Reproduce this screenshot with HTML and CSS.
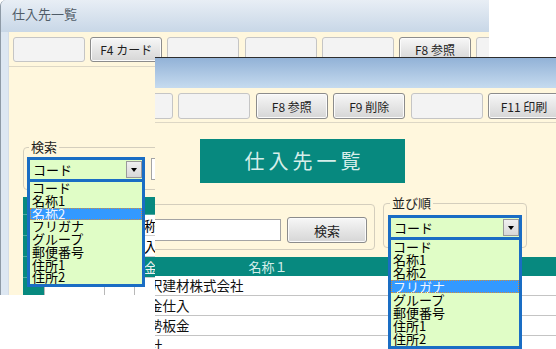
FILE: index.html
```html
<!DOCTYPE html>
<html lang="ja">
<head>
  <meta charset="UTF-8">
  <title>仕入先一覧</title>
  <link rel="stylesheet" href="styles.css">
</head>
<body>
<div class="desk">

  <section class="win win-back">
    <header class="title-bar">仕入先一覧</header>
    <div class="win-body">
      <div class="toolbar">
        <button class="fkey blank"></button>
        <button class="fkey">F4 カード</button>
        <button class="fkey blank"></button>
        <button class="fkey blank"></button>
        <button class="fkey blank"></button>
        <button class="fkey">F8 参照</button>
        <button class="fkey blank"></button>
      </div>

      <fieldset class="group group-find">
        <legend>検索</legend>
        <div class="combo">
          <span class="combo-value">コード</span>
          <span class="combo-arrow"></span>
          <ul class="combo-list list-back">
            <li>コード</li>
            <li>名称1</li>
            <li class="sel">名称2</li>
            <li>フリガナ</li>
            <li>グループ</li>
            <li>郵便番号</li>
            <li>住所1</li>
            <li>住所2</li>
          </ul>
        </div>
        <input class="text-box find-box" type="text">
      </fieldset>

      <div class="grid grid-back">
        <div class="hd"></div><div class="hd"></div><div class="hd"></div><div class="hd"></div>
        <div class="rh"></div><div class="cell"></div><div class="cell"></div><div class="cell">称号</div>
        <div class="rh"></div><div class="cell"></div><div class="cell"></div><div class="cell">入</div>
        <div class="rh"></div><div class="cell on"></div><div class="cell on"></div><div class="cell on">金</div>
        <div class="rh"></div><div class="cell"></div><div class="cell"></div><div class="cell"></div>
      </div>
    </div>
  </section>

  <div class="front-clip">
    <section class="win win-front">
      <header class="title-bar"></header>
      <div class="win-body">
        <div class="toolbar">
          <button class="fkey blank"></button>
          <button class="fkey blank"></button>
          <button class="fkey">F8 参照</button>
          <button class="fkey">F9 削除</button>
          <button class="fkey blank"></button>
          <button class="fkey">F11 印刷</button>
        </div>

        <div class="banner">仕入先一覧</div>

        <div class="filters">
          <fieldset class="group group-search">
            <input class="text-box search-box" type="text">
            <button class="fkey search-btn">検索</button>
          </fieldset>
          <fieldset class="group group-sort">
            <legend>並び順</legend>
            <div class="combo combo-sort">
              <span class="combo-value">コード</span>
              <span class="combo-arrow"></span>
              <ul class="combo-list list-front">
                <li>コード</li>
                <li>名称1</li>
                <li>名称2</li>
                <li class="sel">フリガナ</li>
                <li>グループ</li>
                <li>郵便番号</li>
                <li>住所1</li>
                <li>住所2</li>
              </ul>
            </div>
          </fieldset>
        </div>

        <div class="grid grid-front">
          <div class="hd">名称１</div><div class="hd"></div>
          <div class="cell">沢建材株式会社</div><div class="cell"></div>
          <div class="cell">金仕入</div><div class="cell"></div>
          <div class="cell">勢板金</div><div class="cell"></div>
          <div class="cell">社</div><div class="cell"></div>
        </div>
      </div>
    </section>
  </div>

</div>
</body>
</html>
```

FILE: styles.css
```css
body { margin: 0; background: #fff; font-family: "Noto Sans CJK JP", "Liberation Sans", sans-serif; }
.desk { position: relative; width: 556px; height: 349px; overflow: hidden; background: #fff; }

/* windows */
.win { box-sizing: border-box; }
.win-back { position: absolute; left: 0; top: 0; width: 489px; height: 295px; overflow: hidden; background: #dde7f2; border-left: 1px solid #8e9aa6; border-top-left-radius: 6px; }
.win-back .title-bar { height: 32px; box-sizing: border-box; padding: 5px 0 0 11px; font-size: 13px; line-height: 18px; color: #505c68; background: linear-gradient(#e8eef5, #c8d7e7); }
.win-back .win-body { margin-left: 7px; height: 263px; background: #fff7dd; border-left: 1px solid #d5dde6; }

.front-clip { position: absolute; left: 155px; top: 57px; right: 0; bottom: 0; overflow: hidden; }
.win-front { height: 100%; background: #fff7dd; border-top: 1px solid #2e2e2e; }
.win-front .title-bar { height: 30px; background: linear-gradient(#92b2d7, #c6dbef); }

/* function key bar */
.toolbar { display: flex; border-bottom: 1px solid #ddd7c5; }
.win-back .toolbar { gap: 5.2px; padding: 5px 0 4px 4px; }
.win-front .toolbar { gap: 5.4px; padding: 5px 0 3px 0; margin-left: -54px; }
.fkey { flex: none; width: 72px; height: 25px; padding: 0; font: 12px "Noto Sans CJK JP", sans-serif; color: #1e1e1e; border: 1px solid #8c8c8c; border-radius: 3px; background: linear-gradient(#f7f7f7, #e6e6e6 50%, #d6d6d6); box-shadow: inset 0 0 0 1px #fbfbfb; }
.win-front .fkey { height: 26px; }
.fkey.blank { border-color: #c5c5c5; background: #f3f3f3; box-shadow: none; }

/* group boxes */
.group { margin: 0; border: 1px solid #d4cebd; border-radius: 4px; display: flex; align-items: center; }
.group legend { font-size: 13px; line-height: 16px; padding: 0 2px; margin-left: 2px; color: #1e1e1e; }
.group-find { width: 300px; margin: 72px 0 0 14px; padding: 0 0 7px 3px; }
.find-box { margin-left: 6px; width: 100px; }

.text-box { box-sizing: border-box; height: 22px; border: 1px solid #a4a4a4; background: #fff; padding: 0 3px; }

/* combo boxes */
.combo { position: relative; box-sizing: border-box; display: flex; align-items: center; width: 118px; height: 25px; margin-top: 2px; border: 3px solid #1a6dc4; background: #e0fdc6; }
.combo-value { flex: 1; padding-left: 3px; font-size: 13px; line-height: 19px; color: #000; }
.combo-arrow { box-sizing: border-box; display: flex; align-items: center; justify-content: center; width: 16px; height: 17px; margin-right: 0; border: 1px solid #9a9a9a; background: linear-gradient(#f0f0f0, #d8d8d8); }
.combo-arrow::after { content: ""; border-left: 3.5px solid transparent; border-right: 3.5px solid transparent; border-top: 4px solid #000; }
.combo-list { position: absolute; left: -3px; right: -3px; top: calc(100% + 3px); margin: 0; padding: 0; list-style: none; border: 3px solid #1a6dc4; border-top: 0; background: #e0fdc6; z-index: 2; }
.combo-list li { padding-left: 2px; font-size: 13px; color: #000; white-space: nowrap; }
.list-back li { line-height: 12.75px; }
.list-front li { line-height: 13.2px; }
.combo-list li.sel { background: #3399ff; color: #eef5ff; outline: 1px dotted #d08c3c; outline-offset: -1px; }

/* back grid */
.grid { display: grid; }
.grid-back { margin: 7px 0 0 14px; grid-template-columns: 21px 60px 30px 200px; grid-template-rows: 18px repeat(4, 21px); }
.grid-back .hd, .grid-back .rh { background: #07897f; border-bottom: 1px solid #4fa8a0; }
.grid-back .cell { background: #fff; border-bottom: 1px solid #cfcfcf; border-left: 1px solid #b8b8b8; padding-left: 9px; font-size: 13.5px; line-height: 20px; white-space: nowrap; overflow: hidden; }
.grid-back .cell.on { background: #07897f; color: #f2f2f2; }

/* front window */
.banner { width: 205px; height: 44px; margin: 16px 0 0 45px; background: #07897f; color: #d6eeea; font-size: 20px; line-height: 44px; letter-spacing: 4px; padding-left: 4px; box-sizing: border-box; text-align: center; }

.filters { display: flex; align-items: flex-start; gap: 8px; margin-top: 12px; }
.group-search { margin: 9px 0 0 -30px; padding: 12px 7px 6px 8px; }
.search-box { width: 147px; }
.search-btn { width: 80px; height: 22px; margin-left: 6px; font-size: 13px; }
.group-sort { padding: 0 4px 7px 4px; flex-direction: column; align-items: flex-start; }
.combo-sort { width: 134px; margin-top: 4px; }

.grid-front { margin: 7px 0 0 -12px; grid-template-columns: 250px 1fr; grid-template-rows: 19px; grid-auto-rows: 20px; }
.grid-front .hd { background: #07897f; color: #d6eeea; font-size: 13px; line-height: 19px; text-align: center; }
.grid-front .cell { box-sizing: border-box; background: #fff; border-bottom: 1px solid #c4c4c4; padding-left: 6px; font-size: 13.5px; line-height: 19px; color: #111; white-space: nowrap; }
```
